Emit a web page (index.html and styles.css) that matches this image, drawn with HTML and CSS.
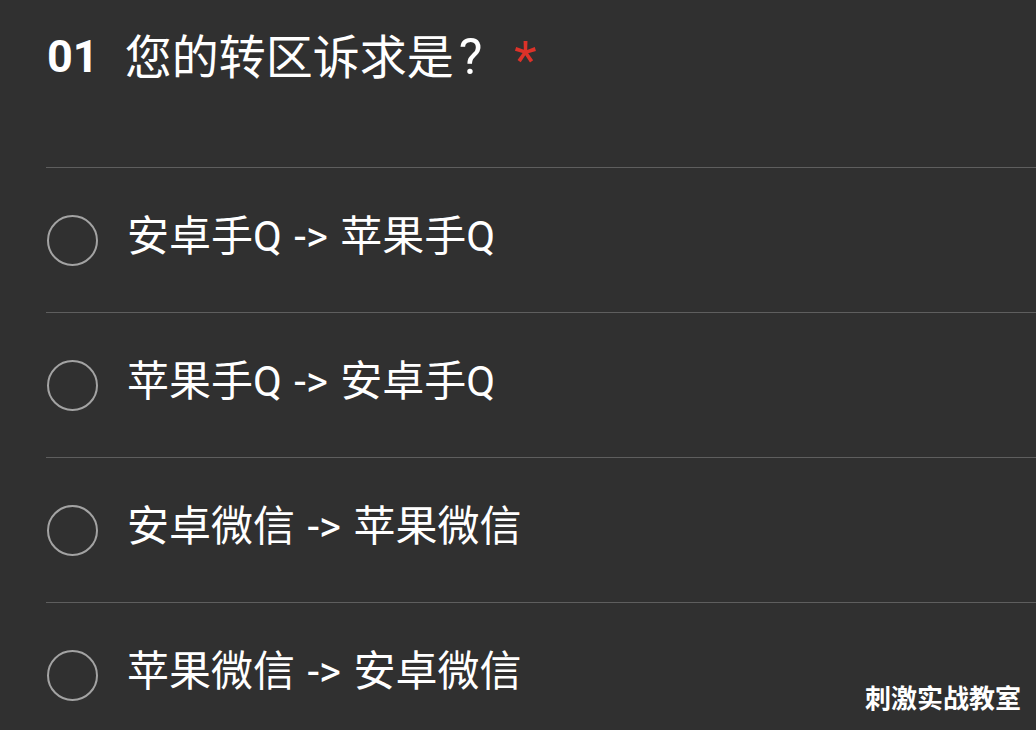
FILE: index.html
```html
<!DOCTYPE html>
<html lang="zh-CN">
<head>
<meta charset="utf-8">
<link rel="stylesheet" href="styles.css">
</head>
<body>
<div class="page">
  <div class="question">
    <span class="num">01</span>
    <span class="qtext">您的转区诉求是<span class="qmark">?</span></span>
    <span class="req">*</span>
  </div>
  <ul class="options">
    <li class="option"><span class="radio"></span><span class="label">安卓手Q -&gt; 苹果手Q</span></li>
    <li class="option"><span class="radio"></span><span class="label">苹果手Q -&gt; 安卓手Q</span></li>
    <li class="option"><span class="radio"></span><span class="label">安卓微信 -&gt; 苹果微信</span></li>
    <li class="option"><span class="radio"></span><span class="label">苹果微信 -&gt; 安卓微信</span></li>
  </ul>
  <div class="watermark">刺激实战教室</div>
</div>
</body>
</html>
```
FILE: styles.css
```css
html, body {
  margin: 0;
  padding: 0;
  background: #303030;
}
body {
  width: 1036px;
  height: 730px;
  overflow: hidden;
  font-family: "Roboto", "Noto Sans CJK SC", sans-serif;
  color: #ffffff;
}
.page {
  position: relative;
  height: 730px;
  padding-left: 46px;
}
.question {
  height: 167px;
  display: flex;
  align-items: flex-start;
  padding-top: 22px;
  box-sizing: border-box;
}
.num {
  font-family: "Roboto", sans-serif;
  font-weight: 700;
  font-size: 45px;
  line-height: 70px;
  margin-right: 26px;
  margin-left: 1px;
}
.qtext {
  font-family: "Roboto", "Noto Sans CJK SC", sans-serif;
  font-size: 47px;
  line-height: 70px;
}
.qmark {
  font-size: 50px;
  margin-left: 5px;
}
.req {
  color: #dc3229;
  font-family: "Roboto", sans-serif;
  font-size: 52px;
  line-height: 70px;
  margin-left: 32px;
  margin-top: 4px;
}
.options {
  list-style: none;
  margin: 0;
  padding: 0;
}
.option {
  height: 144px;
  border-top: 1.5px solid #5e5e5e;
  display: flex;
  align-items: center;
}
.radio {
  width: 47px;
  height: 47px;
  border: 2.5px solid #a3a3a3;
  border-radius: 50%;
  margin-left: 1px;
  margin-right: 29px;
  flex: none;
}
.label {
  font-size: 42px;
  line-height: 1;
  word-spacing: 2px;
  margin-top: -6px;
}
.watermark {
  position: absolute;
  right: 15px;
  bottom: 16px;
  font-family: "Noto Sans CJK SC", sans-serif;
  font-size: 26px;
  font-weight: 700;
  line-height: 34px;
}
```
